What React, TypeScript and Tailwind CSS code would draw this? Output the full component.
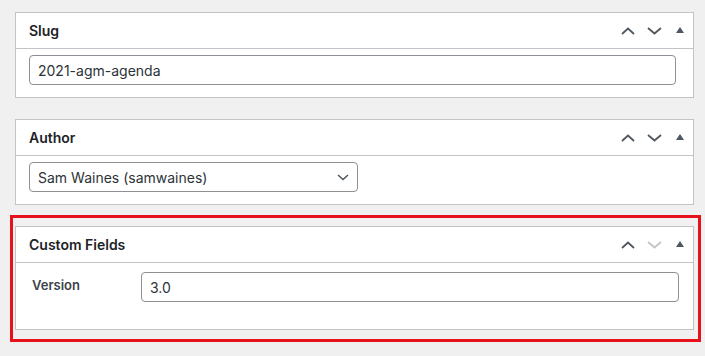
import React from 'react';

const font = { fontFamily: 'Inter, "Noto Sans", sans-serif' };

const ChevronUp = ({ muted = false }: { muted?: boolean }) => (
  <svg width="14" height="8" viewBox="0 0 14 8" className={muted ? 'text-[#c3c4c7]' : 'text-[#50575e]'}>
    <path d="M1 7L7 1.5L13 7" fill="none" stroke="currentColor" strokeWidth="1.8" />
  </svg>
);

const ChevronDown = ({ muted = false }: { muted?: boolean }) => (
  <svg width="15" height="8" viewBox="0 0 15 8" className={muted ? 'text-[#c3c4c7]' : 'text-[#50575e]'}>
    <path d="M1 1L7.5 6.5L14 1" fill="none" stroke="currentColor" strokeWidth="1.8" />
  </svg>
);

const Triangle = () => (
  <svg width="8" height="6" viewBox="0 0 8 6" className="text-[#50575e]">
    <path d="M0 6L4 0L8 6Z" fill="currentColor" />
  </svg>
);

interface PanelProps {
  title: string;
  downMuted?: boolean;
  children: React.ReactNode;
}

const Panel: React.FC<PanelProps> = ({ title, downMuted, children }) => (
  <div className="bg-white border border-[#c3c4c7]">
    <div className="h-[36px] flex items-center justify-between border-b border-[#c3c4c7] pl-[13px]">
      <h2 className="text-[14px] font-semibold text-[#1d2327]">{title}</h2>
      <div className="flex items-center">
        <span className="w-[26px] flex justify-center"><ChevronUp /></span>
        <span className="w-[26px] flex justify-center"><ChevronDown muted={downMuted} /></span>
        <span className="w-[26px] flex justify-center pb-[1px]"><Triangle /></span>
      </div>
    </div>
    {children}
  </div>
);

export default function App() {
  return (
    <div className="relative w-[705px] h-[356px] bg-[#f0f0f1] pt-[12px] pl-[15px] text-[#2c3338]" style={font}>
      <div className="w-[679px] flex flex-col gap-[21px]">
        {/* Slug */}
        <Panel title="Slug">
          <div className="pt-[6px] pb-[12px] pl-[13px] pr-[17px]">
            <div className="h-[30px] rounded-[4px] border border-[#8c8f94] flex items-center px-[8px] text-[14px] text-[#2c3338]">
              2021-agm-agenda
            </div>
          </div>
        </Panel>

        {/* Author */}
        <Panel title="Author">
          <div className="pt-[6px] pb-[12px] pl-[13px]">
            <div className="w-[329px] h-[30px] rounded-[4px] border border-[#8c8f94] flex items-center justify-between pl-[8px] pr-[8px] text-[14px] text-[#2c3338]">
              <span>Sam Waines (samwaines)</span>
              <svg width="12" height="7" viewBox="0 0 12 7" className="text-[#50575e]">
                <path d="M1 1L6 5.5L11 1" fill="none" stroke="currentColor" strokeWidth="1.5" />
              </svg>
            </div>
          </div>
        </Panel>

        {/* Custom Fields */}
        <Panel title="Custom Fields" downMuted>
          <div className="pt-[9px] pb-[27px] pl-[16px] pr-[14px] flex items-start">
            <div className="w-[109px] h-[30px] flex items-center text-[13px] font-semibold text-[#3c434a] pb-[3px]">
              Version
            </div>
            <div className="flex-1 h-[30px] rounded-[4px] border border-[#8c8f94] flex items-center px-[8px] text-[14px] text-[#2c3338]">
              3.0
            </div>
          </div>
        </Panel>
      </div>

      {/* highlight annotation */}
      <div className="absolute left-[10px] top-[215px] w-[691px] h-[127px] border-[3px] border-[#e8101a] pointer-events-none" />
    </div>
  );
}
